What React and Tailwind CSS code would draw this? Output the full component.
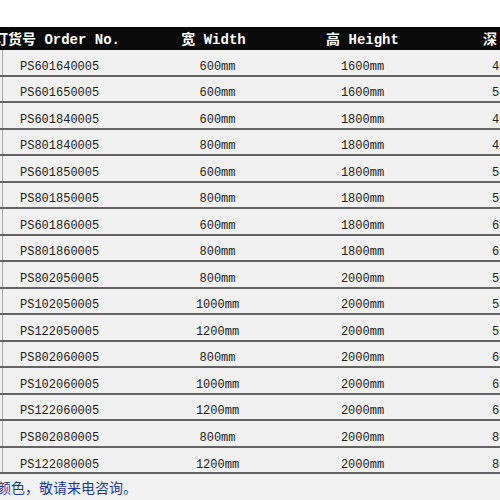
import React from "react";

const rows = [
  ["PS601640005", "600mm", "1600mm", "400mm"],
  ["PS601650005", "600mm", "1600mm", "500mm"],
  ["PS601840005", "600mm", "1800mm", "400mm"],
  ["PS801840005", "800mm", "1800mm", "400mm"],
  ["PS601850005", "600mm", "1800mm", "500mm"],
  ["PS801850005", "800mm", "1800mm", "500mm"],
  ["PS601860005", "600mm", "1800mm", "600mm"],
  ["PS801860005", "800mm", "1800mm", "600mm"],
  ["PS802050005", "800mm", "2000mm", "500mm"],
  ["PS102050005", "1000mm", "2000mm", "500mm"],
  ["PS122050005", "1200mm", "2000mm", "500mm"],
  ["PS802060005", "800mm", "2000mm", "600mm"],
  ["PS102060005", "1000mm", "2000mm", "600mm"],
  ["PS122060005", "1200mm", "2000mm", "600mm"],
  ["PS802080005", "800mm", "2000mm", "800mm"],
  ["PS122080005", "1200mm", "2000mm", "800mm"],
];

const font = { fontFamily: '"Liberation Mono", "Noto Sans CJK SC", monospace' };

export default function App() {
  return (
    <div className="w-[500px] h-[500px] overflow-hidden bg-[#f2f2f2] text-[#222]" style={font}>
      <div className="h-[27px] bg-white" />
      <div className="h-[23px] bg-[#0a0a0a] text-white font-bold text-[14px] flex items-center whitespace-nowrap pt-[4px]">
        <div className="w-[145px] shrink-0">
          <span className="-ml-[6px] inline-block">订货号 Order No.</span>
        </div>
        <div className="w-[145px] shrink-0 text-center pr-[8px]">宽 Width</div>
        <div className="w-[145px] shrink-0 text-center">高 Height</div>
        <div className="w-[145px] shrink-0 pl-[48px]">深 Depth</div>
      </div>
      <div className="bg-[#f1f1f1]">
        {rows.map((r, i) => (
          <div
            key={i}
            className="h-[26.53px] flex items-center border-b-2 border-[#646464] text-[12px] whitespace-nowrap"
          >
            <div className="w-[145px] shrink-0 h-full flex items-center">
              <div className="w-[3px] h-full border-r border-[#a8a8a8] mr-[17px]" />
              <span className="pt-[9px]">{r[0]}</span>
            </div>
            <div className="w-[145px] shrink-0 text-center pt-[9px]">{r[1]}</div>
            <div className="w-[145px] shrink-0 text-center pt-[9px]">{r[2]}</div>
            <div className="w-[145px] shrink-0 pl-[57px] pt-[9px]">{r[3]}</div>
          </div>
        ))}
      </div>
      <div className="pt-[3px] text-[14px] text-[#1c3896] whitespace-nowrap" style={{ fontFamily: '"Noto Sans CJK SC", sans-serif' }}>
        <span className="-ml-[3px] inline-block">颜色，敬请来电咨询。</span>
      </div>
    </div>
  );
}
